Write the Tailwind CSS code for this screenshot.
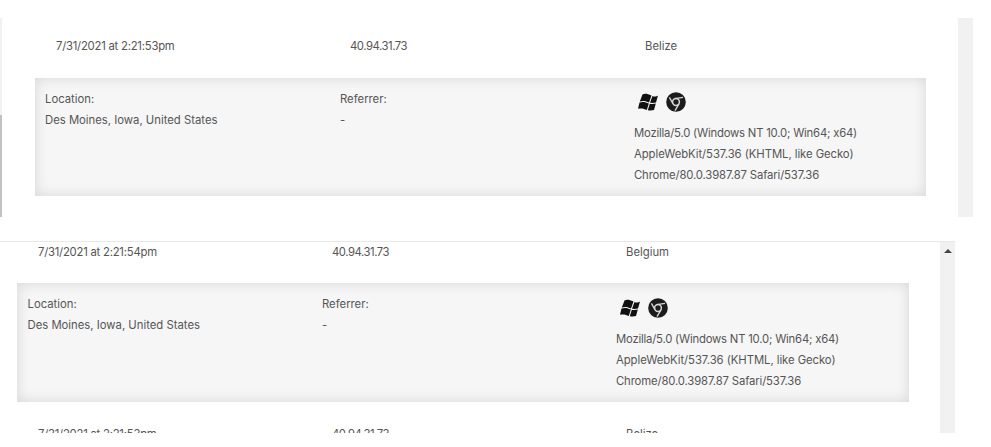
<!DOCTYPE html>
<html lang="en">

<head>
    <meta charset="UTF-8" />
    <title>Visitor log</title>
    <script src="https://cdn.jsdelivr.net/npm/@tailwindcss/browser@4"></script>
</head>

<body class="bg-white">
    <div class="w-[991px] h-[447px] overflow-hidden pt-[18px] font-['Inter',sans-serif] text-[11.3px] text-[#555]">

        <!-- First crop -->
        <div class="flex w-[973px] h-[199px]">
            <div class="w-[2px] flex flex-col">
                <div class="h-[97px] bg-[#f1f1f1]"></div>
                <div class="flex-1 bg-[#c1c1c1]"></div>
            </div>
            <div class="flex-1 pl-[33px] pr-[32px]">
                <div class="flex h-[60px] pt-[21px] pl-[21px] leading-[14px]">
                    <div class="w-[294px] tracking-[-0.23px]">7/31/2021 at 2:21:53pm</div>
                    <div class="w-[295px] tracking-[-0.45px]">40.94.31.73</div>
                    <div>Belize</div>
                </div>
                <div class="flex h-[118px] pl-[10px] bg-[#f6f6f6] shadow-[inset_0_0_14px_rgba(0,0,0,0.13)] leading-[21px]">
                    <div class="w-[295px] pt-[11px]">
                        <p>Location:</p>
                        <p>Des Moines, Iowa, United States</p>
                    </div>
                    <div class="w-[294px] pt-[11px]">
                        <p>Referrer:</p>
                        <p>-</p>
                    </div>
                    <div class="pt-[13px]">
                        <div class="flex items-center gap-[8px] h-[22px] pl-[4px] mb-[10px]">
                            <svg class="w-[20px] h-[19px]" viewBox="0 0 20 19" fill="#111"><path d="M4.5 1.5C6.5.5 9 .5 13.5 2.5L11 9.5C8 8 5 7.5 1.8 8.5ZM14.5 3C16 4 18.5 3.5 20 2.5L18 9.5C16 10 14 10 12 9.8ZM1.5 9.5C4.5 8.5 8 9 10.8 10.5L8.8 17C6 15.5 3 15 0 15.8ZM11.8 10.8C14 11.2 16 11 17.8 10.5L16 17C14 17.5 12 17.5 9.8 17.2Z"/></svg>
                            <svg class="w-[20px] h-[20px]" viewBox="0 0 20 20"><circle cx="10" cy="10" r="9.8" fill="#1c1c1c"/><circle cx="10" cy="10" r="3.4" fill="none" stroke="#d8d8d8" stroke-width="1.5"/><path d="M9 6.6 17 5.4M6.9 11.6 3.4 5.4M13 11.8 9 18.6" stroke="#d8d8d8" stroke-width="1.3" fill="none"/></svg>
                        </div>
                        <p class="tracking-[-0.2px]">Mozilla/5.0 (Windows NT 10.0; Win64; x64)</p>
                        <p class="tracking-[-0.05px]">AppleWebKit/537.36 (KHTML, like Gecko)</p>
                        <p class="tracking-[-0.13px]">Chrome/80.0.3987.87 Safari/537.36</p>
                    </div>
                </div>
            </div>
            <div class="w-[15px] bg-[#f1f1f1]"></div>
        </div>

        <!-- Second crop -->
        <div class="flex w-[955px] h-[192px] mt-[24px] border-t border-[#e8e8e8]">
            <div class="w-[940px] overflow-hidden pl-[17px] pr-[31px]">
                <div class="flex h-[41px] pt-[3px] pl-[21px] leading-[14px]">
                    <div class="w-[294px] tracking-[-0.23px]">7/31/2021 at 2:21:54pm</div>
                    <div class="w-[294px] tracking-[-0.45px]">40.94.31.73</div>
                    <div>Belgium</div>
                </div>
                <div class="flex h-[119px] pl-[10.5px] bg-[#f6f6f6] shadow-[inset_0_0_14px_rgba(0,0,0,0.13)] leading-[21px]">
                    <div class="w-[294.5px] pt-[11px]">
                        <p>Location:</p>
                        <p>Des Moines, Iowa, United States</p>
                    </div>
                    <div class="w-[294px] pt-[11px]">
                        <p>Referrer:</p>
                        <p>-</p>
                    </div>
                    <div class="pt-[14px]">
                        <div class="flex items-center gap-[8px] h-[22px] pl-[4px] mb-[10px]">
                            <svg class="w-[20px] h-[19px]" viewBox="0 0 20 19" fill="#111"><path d="M4.5 1.5C6.5.5 9 .5 13.5 2.5L11 9.5C8 8 5 7.5 1.8 8.5ZM14.5 3C16 4 18.5 3.5 20 2.5L18 9.5C16 10 14 10 12 9.8ZM1.5 9.5C4.5 8.5 8 9 10.8 10.5L8.8 17C6 15.5 3 15 0 15.8ZM11.8 10.8C14 11.2 16 11 17.8 10.5L16 17C14 17.5 12 17.5 9.8 17.2Z"/></svg>
                            <svg class="w-[20px] h-[20px]" viewBox="0 0 20 20"><circle cx="10" cy="10" r="9.8" fill="#1c1c1c"/><circle cx="10" cy="10" r="3.4" fill="none" stroke="#d8d8d8" stroke-width="1.5"/><path d="M9 6.6 17 5.4M6.9 11.6 3.4 5.4M13 11.8 9 18.6" stroke="#d8d8d8" stroke-width="1.3" fill="none"/></svg>
                        </div>
                        <p class="tracking-[-0.2px]">Mozilla/5.0 (Windows NT 10.0; Win64; x64)</p>
                        <p class="tracking-[-0.05px]">AppleWebKit/537.36 (KHTML, like Gecko)</p>
                        <p class="tracking-[-0.13px]">Chrome/80.0.3987.87 Safari/537.36</p>
                    </div>
                </div>
                <div class="flex pt-[25px] pl-[21px] leading-[14px]">
                    <div class="w-[294px] tracking-[-0.23px]">7/31/2021 at 2:21:53pm</div>
                    <div class="w-[294px] tracking-[-0.45px]">40.94.31.73</div>
                    <div>Belize</div>
                </div>
            </div>
            <div class="w-[15px] bg-[#f1f1f1] flex justify-center pt-[7px]">
                <div class="w-0 h-0 border-x-[4px] border-x-transparent border-b-[4px] border-b-[#444]"></div>
            </div>
        </div>
    </div>
</body>

</html>
